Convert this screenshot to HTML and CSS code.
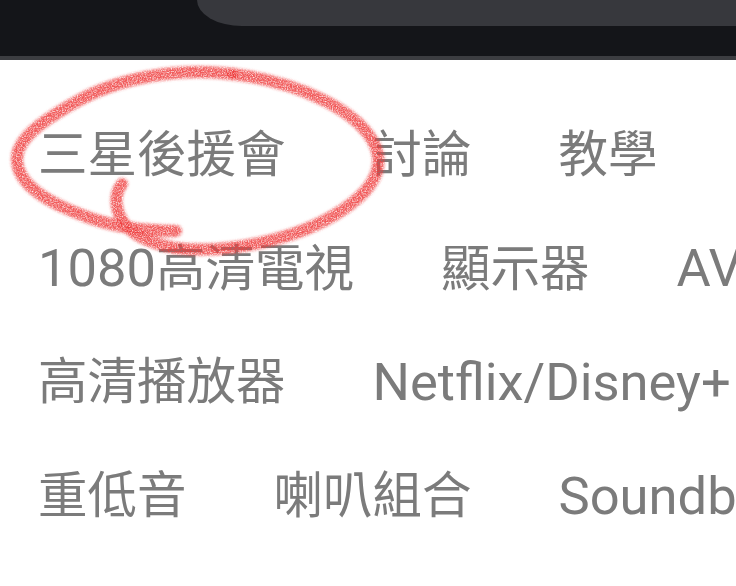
FILE: index.html
```
<!DOCTYPE html>
<html lang="zh-Hant">
<head>
<meta charset="utf-8">
<title>Tags</title>
<link rel="stylesheet" href="styles.css">
</head>
<body>
<header class="topbar"><div class="search"></div></header>
<div class="divider"></div>
<main class="tags">
  <div class="row"><span>三星後援會</span><span>討論</span><span>教學</span></div>
  <div class="row"><span><span class="lat">1080</span>高清電視</span><span>顯示器</span><span><span class="lat">AV</span>擴音機</span></div>
  <div class="row"><span>高清播放器</span><span class="lat">Netflix/Disney+</span></div>
  <div class="row"><span>重低音</span><span>喇叭組合</span><span class="lat">Soundbar</span></div>
</main>
<svg class="scribble" viewBox="0 0 736 586" width="736" height="586" aria-hidden="true">
  <defs>
    <filter id="chalk" x="-5%" y="-5%" width="110%" height="110%" color-interpolation-filters="sRGB">
      <feGaussianBlur in="SourceGraphic" stdDeviation="1.8" result="soft"/>
      <feTurbulence type="fractalNoise" baseFrequency="0.8" numOctaves="2" seed="4" result="n"/>
      <feColorMatrix in="n" type="matrix" values="0 0 0 0 0  0 0 0 0 0  0 0 0 0 0  1.8 0 0 0 -0.1" result="grain"/>
      <feComposite in="soft" in2="grain" operator="in"/>
    </filter>
  </defs>
  <g filter="url(#chalk)">
    <path class="ink" d="M122 184C114 194 115 208 122 220C130 234 148 243 175 248C222 254 296 242 344 209C372 190 384 170 376 148C362 112 300 82 232 74"/>
    <path class="ink" d="M232 74C180 68 122 76 76 102C40 122 16 140 17 160C18 186 50 204 90 218C118 228 146 231 176 231"/>
  </g>
</svg>
</body>
</html>
```
FILE: styles.css
```
html, body {
  margin: 0;
  padding: 0;
  height: 586px;
  overflow: hidden;
  background: #fff;
}
body {
  position: relative;
  width: 736px;
  font-family: Roboto, "Noto Sans CJK TC", sans-serif;
}
.topbar {
  height: 56px;
  background: #141519;
  padding-left: 197px;
}
.search {
  height: 26px;
  background: #37383d;
  border-bottom-left-radius: 52px 30px;
}
.divider {
  height: 4px;
  background: #3c3d41;
}
.tags {
  display: flex;
  flex-direction: column;
  gap: 48.5px;
  padding: 63px 0 0 38px;
  overflow: hidden;
}
.row {
  display: flex;
  gap: 87px;
  height: 65px;
  align-items: center;
  font-size: 49.5px;
  line-height: 65px;
  color: #7b7b7b;
  white-space: nowrap;
}
.lat {
  font-size: 52.5px;
}
.scribble {
  position: absolute;
  left: 0;
  top: 0;
  pointer-events: none;
}
.ink {
  fill: none;
  stroke: #ee3e3e;
  stroke-width: 12;
  stroke-linecap: round;
  stroke-opacity: 0.85;
}
```
